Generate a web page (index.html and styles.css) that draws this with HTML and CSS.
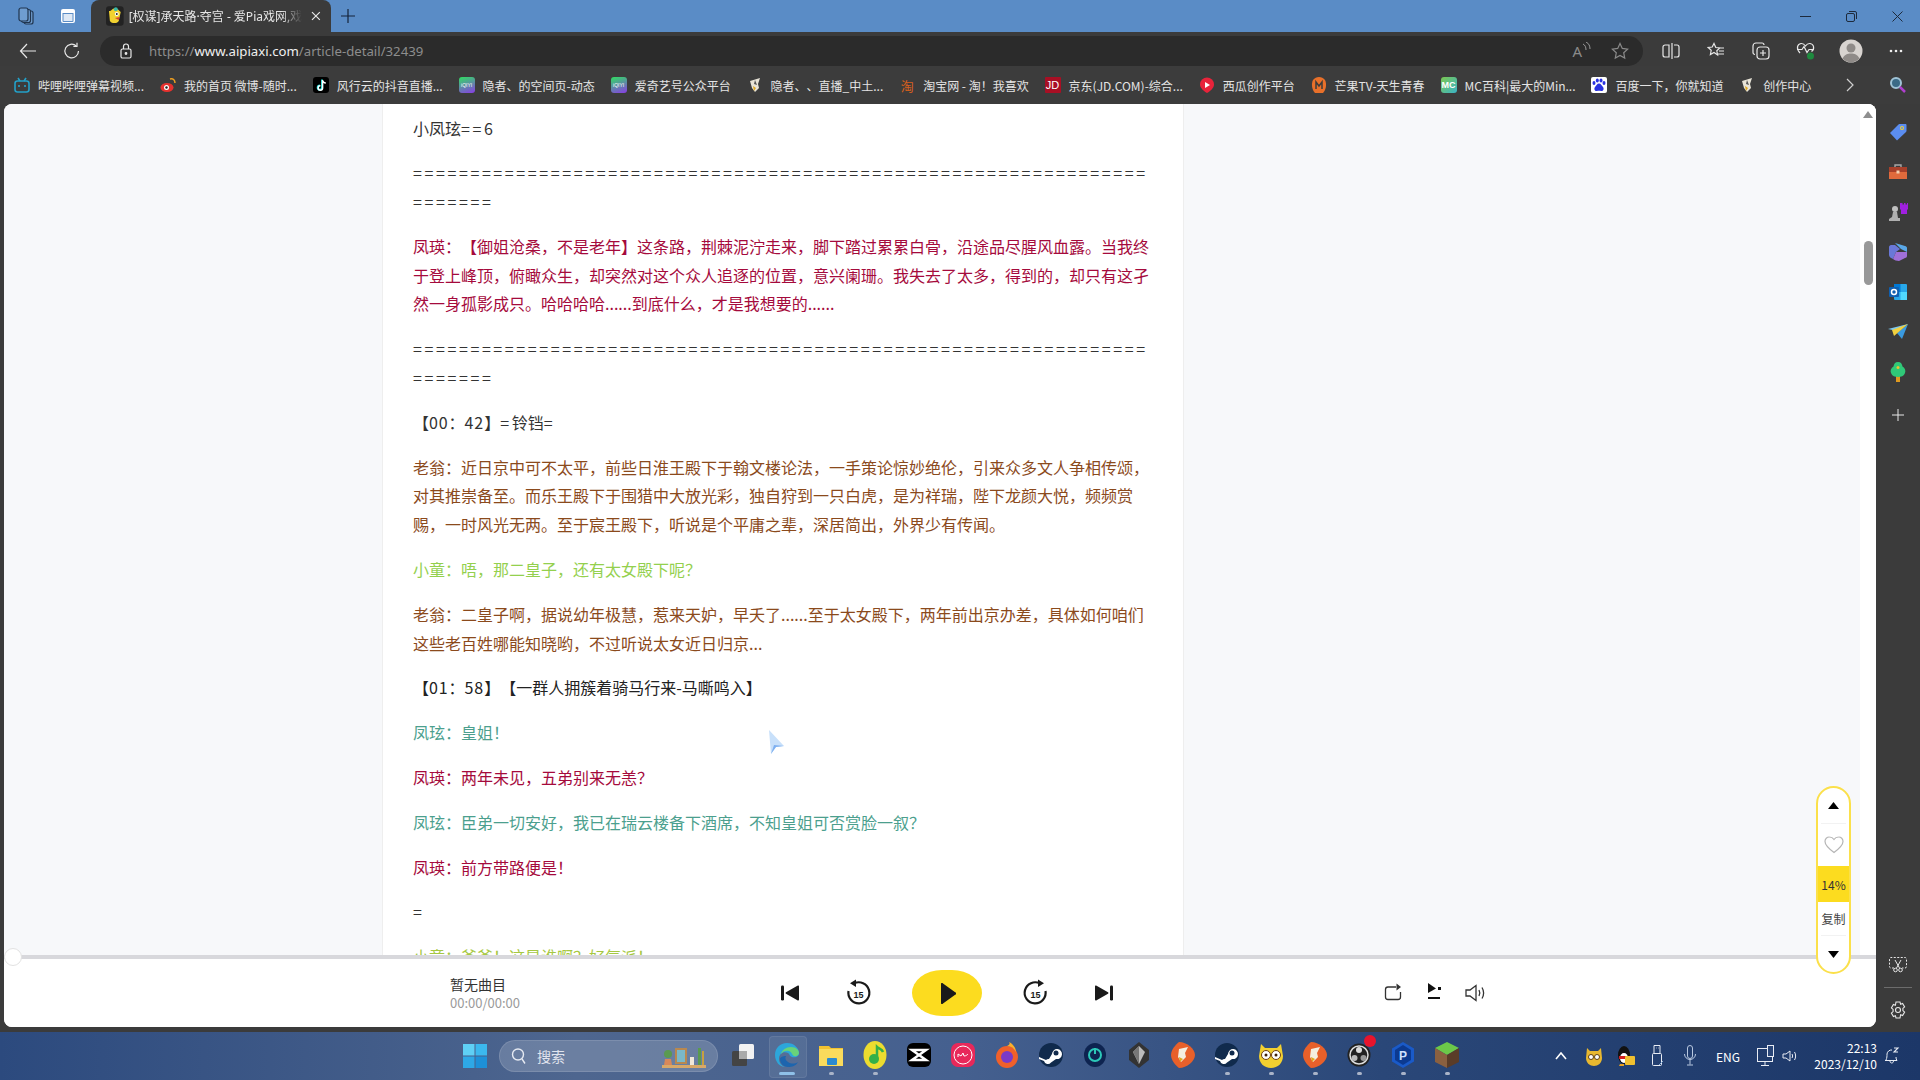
FILE: index.html
```html
<!DOCTYPE html>
<html lang="zh-CN">
<head>
<meta charset="UTF-8" />
<title>[权谋]承天路·夺宫 - 爱Pia戏网</title>
<link rel="stylesheet" href="styles.css">
</head>
<body>
<div class="screen">

  <!-- title bar -->
  <div class="titlebar">
    <span class="bar-slot"><svg width="20" height="20" viewBox="0 0 20 20" fill="none" stroke="#20354f" stroke-width="1.2"><rect x="8" y="5" width="9" height="13" rx="2" fill="#6f9dd0"/><rect x="5.5" y="3.5" width="9" height="13" rx="2" fill="#6f9dd0"/><rect x="3" y="2" width="9" height="13" rx="2" fill="#6f9dd0"/></svg></span>
    <span class="bar-slot"><svg width="16" height="16" viewBox="0 0 16 16" fill="#fff"><path d="M3 1h10a2 2 0 0 1 2 2v10a2 2 0 0 1-2 2H3a2 2 0 0 1-2-2V3a2 2 0 0 1 2-2z"/><path d="M2.5 5h11v8a1 1 0 0 1-1 1h-9a1 1 0 0 1-1-1z" fill="#5a8cc6"/><rect x="3.5" y="6" width="9" height="7" fill="#dfe9f5"/></svg></span>
    <div class="tab">
      <svg width="18" height="20" viewBox="0 0 18 20"><rect width="18" height="20" rx="3" fill="#222"/><path d="M3 5c3 0 3-3 6-3s4 2 6 4l-2 9c-2 3-7 3-9 0z" fill="#f2d230"/><circle cx="11" cy="8" r="2" fill="#fff"/><circle cx="11" cy="8" r="1" fill="#222"/><path d="M9 12l5-1-1 3z" fill="#d8402e"/><circle cx="10" cy="3" r="2" fill="#38b6a8"/></svg>
      <span class="tab-title">[权谋]承天路·夺宫 - 爱Pia戏网,戏</span>
      <svg width="10" height="10" viewBox="0 0 10 10" stroke="#e8e8e8" stroke-width="1.2"><path d="M1 1l8 8M9 1l-8 8"/></svg>
    </div>
    <span class="new-tab"><svg width="16" height="16" viewBox="0 0 16 16" stroke="#14233a" stroke-width="1.2"><path d="M8 1v14M1 8h14"/></svg></span>
    <div class="win-btns">
      <span><svg width="11" height="11" viewBox="0 0 11 11" stroke="#1d2a3c"><path d="M0 5.5h11"/></svg></span>
      <span><svg width="11" height="11" viewBox="0 0 11 11" fill="none" stroke="#1d2a3c"><rect x="0.5" y="2.5" width="8" height="8" rx="1.5"/><path d="M3 0.5h6a1.5 1.5 0 0 1 1.5 1.5v6"/></svg></span>
      <span><svg width="11" height="11" viewBox="0 0 11 11" stroke="#1d2a3c"><path d="M0.5 0.5l10 10M10.5 0.5l-10 10"/></svg></span>
    </div>
  </div>

  <!-- toolbar -->
  <div class="toolbar">
    <span class="tool-slot"><svg width="18" height="18" viewBox="0 0 18 18" fill="none" stroke="#e8e8e8" stroke-width="1.2"><path d="M17 9H1.5M8 2L1.5 9 8 16"/></svg></span>
    <span class="tool-slot"><svg width="18" height="18" viewBox="0 0 18 18" fill="none" stroke="#e8e8e8" stroke-width="1.2"><path d="M15.5 9a6.8 6.8 0 1 1-2.2-5"/><path d="M14 .8v3.6h-3.6"/></svg></span>
    <div class="address">
      <svg width="14" height="16" viewBox="0 0 14 16" fill="none" stroke="#e8e8e8" stroke-width="1.2"><rect x="2" y="6" width="10" height="9" rx="1.5"/><path d="M4.500 6V3.500a2.500 2.500 0 0 1 5 0V6"/><circle cx="7" cy="10.500" r=".8" fill="#e8e8e8"/></svg>
      <span class="url"><span>https://</span><b>www.aipiaxi.com</b><span>/article-detail/32439</span></span>
      <span class="addr-right">
        <span class="read-a">A<svg width="9" height="12" viewBox="0 0 9 12" fill="none" stroke="#9a9a9a"><path d="M1 2c2 1 3 3 3 6M4 0c3 1.500 4 4 4 7"/></svg></span>
        <svg width="18" height="18" viewBox="0 0 18 18" fill="none" stroke="#8a8a8a" stroke-width="1.2"><path d="M9 1.500l2.300 4.900 5.300.7-3.900 3.600 1 5.300L9 13.400 4.300 16l1-5.300L1.400 7.100l5.300-.7z"/></svg>
      </span>
    </div>
    <div class="tool-right">
      <span><svg width="18" height="18" viewBox="0 0 18 18" fill="none" stroke="#e8e8e8" stroke-width="1.2"><path d="M7 3H3a2 2 0 0 0-2 2v8a2 2 0 0 0 2 2h4zM10 1v16M12 3h3a2 2 0 0 1 2 2v8a2 2 0 0 1-2 2h-3"/></svg></span>
      <span><svg width="18" height="18" viewBox="0 0 18 18" fill="none" stroke="#e8e8e8" stroke-width="1.2"><path d="M7 1.500l1.800 4 4 .5-3 2.800.8 4.200L7 10.500 3.400 12.500l.8-4.200-3-2.800 4-.5zM12 6h5M12 9h5M11 12h6"/></svg></span>
      <span><svg width="18" height="18" viewBox="0 0 18 18" fill="none" stroke="#e8e8e8" stroke-width="1.2"><path d="M3 12.500A2 2 0 0 1 1 10.500V4a3 3 0 0 1 3-3h6a2 2 0 0 1 2 2"/><rect x="5" y="5" width="12" height="12" rx="3"/><path d="M11 8v6M8 11h6"/></svg></span>
      <span class="health"><svg width="20" height="20" viewBox="0 0 20 20" fill="none" stroke="#e8e8e8" stroke-width="1.2"><path d="M4 12C0 8 1 3 5 2.500c2-.2 3.500 1 4.500 2.500 1-1.500 2.500-2.700 4.500-2.500 4 .5 5 5.500 1.500 8"/><path d="M1 8.500h5l2-3 3 6 2-3h5"/><circle cx="14.500" cy="15" r="3.500" fill="#1e8a3e" stroke="none"/></svg></span>
      <span><svg width="24" height="24" viewBox="0 0 24 24"><circle cx="12" cy="12" r="11.500" fill="#d8d4d0"/><circle cx="12" cy="9" r="4.500" fill="#8f8b88"/><path d="M3.500 19.500c2-4 5-5 8.500-5s6.500 1 8.500 5a11.500 11.500 0 0 1-17 0z" fill="#8f8b88"/></svg></span>
      <span><svg width="14" height="4" viewBox="0 0 14 4" fill="#eee"><circle cx="2" cy="2" r="1.300"/><circle cx="7" cy="2" r="1.300"/><circle cx="12" cy="2" r="1.300"/></svg></span>
    </div>
  </div>

  <!-- bookmarks -->
  <div class="bookmarks">
    <a class="bm"><svg width="16" height="16" viewBox="0 0 16 16" fill="none" stroke="#23a0c8" stroke-width="1.600"><rect x="1" y="4" width="14" height="11" rx="2.500"/><path d="M4 1l2 3M12 1l-2 3M5 8v2M11 8v2"/></svg>哔哩哔哩弹幕视频...</a>
    <a class="bm"><svg width="16" height="16" viewBox="0 0 16 16"><ellipse cx="7" cy="10.500" rx="6.500" ry="4.500" fill="#e6322e"/><circle cx="6.500" cy="10.500" r="2.500" fill="#fff"/><circle cx="6.500" cy="10.500" r="1.200" fill="#222"/><path d="M10 2c3-1 5 1 5 4" fill="none" stroke="#f0a020" stroke-width="1.500"/></svg>我的首页 微博-随时...</a>
    <a class="bm"><svg width="16" height="16" viewBox="0 0 16 16"><rect width="16" height="16" rx="3" fill="#000"/><path d="M9 2.500v8a2.200 2.200 0 1 1-2.200-2.200" fill="none" stroke="#25f4ee" stroke-width="1.800"/><path d="M9.600 3v8a2.200 2.200 0 1 1-2.200-2.200M9.600 3c.3 2 1.500 3 3.200 3" fill="none" stroke="#fff" stroke-width="1.500"/></svg>风行云的抖音直播...</a>
    <a class="bm"><span class="iq">iQIYI</span>隐者、的空间页-动态</a>
    <a class="bm"><span class="iq">iQIYI</span>爱奇艺号公众平台</a>
    <a class="bm"><svg width="16" height="16" viewBox="0 0 16 16"><path d="M3 4l10-3-2 6 1 4-4 4-3-4z" fill="#e8e4d8"/><path d="M6 9l3 2-2 3z" fill="#e0a820"/><path d="M8 3l2 5-3-1z" fill="#555"/></svg>隐者、、直播_中土...</a>
    <a class="bm"><span class="tao">淘</span>淘宝网 - 淘！我喜欢</a>
    <a class="bm"><span class="jd">JD</span>京东(JD.COM)-综合...</a>
    <a class="bm"><svg width="16" height="16" viewBox="0 0 16 16"><path d="M8 16C3 13 1 10 1 7.500a7 7 0 0 1 14 0C15 10 13 13 8 16z" fill="#e8233a"/><path d="M6 5l5 3-5 3z" fill="#fff"/></svg>西瓜创作平台</a>
    <a class="bm"><svg width="16" height="18" viewBox="0 0 16 18"><path d="M2 4c3-4 9-4 12 0 2 4 1 10-2 13H4C1 14 0 8 2 4z" fill="#e8702a"/><path d="M5 13V6l3 4 3-4v7" fill="none" stroke="#3b3b3b" stroke-width="1.500"/></svg>芒果TV-天生青春</a>
    <a class="bm"><span class="mc">MC</span>MC百科|最大的Min...</a>
    <a class="bm"><svg width="16" height="16" viewBox="0 0 16 16"><rect width="16" height="16" rx="2" fill="#fff"/><g fill="#2932e1"><ellipse cx="3" cy="6" rx="1.500" ry="2"/><ellipse cx="6.300" cy="3.500" rx="1.500" ry="2"/><ellipse cx="10" cy="3.500" rx="1.500" ry="2"/><ellipse cx="13" cy="6" rx="1.500" ry="2"/><path d="M8 6.500c2 0 2.500 2 4 3.500 1.500 2 0 4.500-2 4-1-.3-3-.3-4 0-2 .5-3.500-2-2-4 1.500-1.500 2-3.500 4-3.500z"/></g></svg>百度一下，你就知道</a>
    <a class="bm"><svg width="16" height="16" viewBox="0 0 16 16"><path d="M3 4l10-3-2 6 1 4-4 4-3-4z" fill="#e8e4d8"/><path d="M6 9l3 2-2 3z" fill="#e0a820"/><path d="M8 3l2 5-3-1z" fill="#555"/></svg>创作中心</a>
    <svg class="bm-more" width="8" height="14" viewBox="0 0 8 14" fill="none" stroke="#cfcfcf" stroke-width="1.200"><path d="M1 1l6 6-6 6"/></svg>
    <svg class="bm-search" width="18" height="18" viewBox="0 0 18 18" fill="none"><circle cx="7" cy="7" r="5" stroke="#9fc3d6" stroke-width="2" fill="#3a6a86"/><path d="M11 11l5 5" stroke="#b040d0" stroke-width="2.500"/></svg>
  </div>

  <div class="main">
    <div class="content">
      <div class="reader">
        <div class="article">
          <p>小凤玹<span class="eq">==6</span></p>
          <p class="sep">=======================================================================</p>
          <p class="red">凤瑛：【御姐沧桑，不是老年】这条路，荆棘泥泞走来，脚下踏过累累白骨，沿途品尽腥风血露。当我终于登上峰顶，俯瞰众生，却突然对这个众人追逐的位置，意兴阑珊。我失去了太多，得到的，却只有这孑然一身孤影成只。哈哈哈哈......到底什么，才是我想要的......</p>
          <p class="sep">=======================================================================</p>
          <p>【<span class="num">00</span>：<span class="num">42</span>】<span class="eq">=</span>铃铛<span class="eq">=</span></p>
          <p class="brown">老翁：近日京中可不太平，前些日淮王殿下于翰文楼论法，一手策论惊妙绝伦，引来众多文人争相传颂，对其推崇备至。而乐王殿下于围猎中大放光彩，独自狩到一只白虎，是为祥瑞，陛下龙颜大悦，频频赏赐，一时风光无两。至于宸王殿下，听说是个平庸之辈，深居简出，外界少有传闻。</p>
          <p class="lime">小童：唔，那二皇子，还有太女殿下呢？</p>
          <p class="brown">老翁：二皇子啊，据说幼年极慧，惹来天妒，早夭了......至于太女殿下，两年前出京办差，具体如何咱们这些老百姓哪能知晓哟，不过听说太女近日归京...</p>
          <p class="dark">【<span class="num">01</span>：<span class="num">58</span>】【一群人拥簇着骑马行来-马嘶鸣入】</p>
          <p class="teal">凤玹：皇姐！</p>
          <p class="red">凤瑛：两年未见，五弟别来无恙？</p>
          <p class="teal">凤玹：臣弟一切安好，我已在瑞云楼备下酒席，不知皇姐可否赏脸一叙？</p>
          <p class="red">凤瑛：前方带路便是！</p>
          <p>=</p>
          <p class="olive">小童：爷爷！这是谁啊？好气派！</p>
        </div>
        <div class="scroll-track">
          <svg class="scroll-up" width="10" height="7" viewBox="0 0 10 7" fill="#8f8f8f"><path d="M5 0l5 7H0z"/></svg>
          <span class="scroll-thumb"></span>
        </div>
      </div>

      <div class="progress"><span class="progress-dot"></span></div>
      <div class="player">
        <div class="track">
          <div class="track-name">暂无曲目</div>
          <div class="track-time">00:00/00:00</div>
        </div>
        <div class="controls">
          <svg width="32" height="32" viewBox="0 0 32 32" fill="#1a1a1a"><rect x="7" y="8.500" width="3" height="15" rx="1.200"/><path d="M25 9.500v13a1 1 0 0 1-1.600.8L12 16.800a1 1 0 0 1 0-1.600l11.400-6.500a1 1 0 0 1 1.600.8z"/></svg>
          <svg width="32" height="32" viewBox="0 0 32 32" fill="none"><path d="M12 6.500A10.500 10.500 0 1 1 6.500 14" stroke="#1a1a1a" stroke-width="2.200"/><path d="M14 2.500v7.500l-6-3.700z" fill="#1a1a1a"/><text x="16.500" y="20.500" class="skip-num">15</text></svg>
          <span class="play"><svg width="15" height="21" viewBox="0 0 15 21" fill="#1a1a1a"><path d="M2 .5l12.500 9a1 1 0 0 1 0 2L2 20.500a1 1 0 0 1-2-1v-18a1 1 0 0 1 2-1z"/></svg></span>
          <svg width="32" height="32" viewBox="0 0 32 32" fill="none"><path d="M20 6.500A10.500 10.500 0 1 0 25.500 14" stroke="#1a1a1a" stroke-width="2.200"/><path d="M18 2.500v7.500l6-3.700z" fill="#1a1a1a"/><text x="15.500" y="20.500" class="skip-num">15</text></svg>
          <svg width="32" height="32" viewBox="0 0 32 32" fill="#1a1a1a"><rect x="22" y="8.500" width="3" height="15" rx="1.200"/><path d="M7 9.500v13a1 1 0 0 0 1.600.8L20 16.800a1 1 0 0 0 0-1.600L8.600 8.700a1 1 0 0 0-1.600.8z"/></svg>
        </div>
        <div class="player-right">
          <svg width="28" height="28" viewBox="0 0 28 28" fill="none" stroke="#333" stroke-width="1.300"><path d="M17 8H9a2.500 2.500 0 0 0-2.500 2.500V18A2.500 2.500 0 0 0 9 20.500h10a2.500 2.500 0 0 0 2.500-2.500v-5"/><path d="M17.500 4.500L22 8l-4.500 3.500z" fill="#333" stroke="none"/></svg>
          <svg width="28" height="28" viewBox="0 0 28 28" fill="#111"><path d="M8 4l8 5.500L8 14z"/><rect x="18" y="8" width="3" height="3"/><rect x="8" y="18" width="12" height="2"/></svg>
          <svg width="28" height="28" viewBox="0 0 28 28" fill="none" stroke="#333" stroke-width="1.300"><path d="M5 11h4l6-4.500v15L9 17H5z"/><path d="M18 11c1 1.800 1 4.200 0 6M21 8.500c2 3.400 2 7.600 0 11"/></svg>
        </div>
      </div>

      <!-- floating tools -->
      <div class="float-bar">
        <div class="float-cell f-up"><svg width="11" height="7" viewBox="0 0 11 7"><path d="M5.500 0L11 7H0z"/></svg></div>
        <div class="float-cell f-heart"><svg width="20" height="18" viewBox="0 0 20 18" fill="none" stroke="#b5b5b5" stroke-width="1.200"><path d="M10 16.500C4 12 1 9 1 5.500A4.300 4.300 0 0 1 5.500 1C7.500 1 9 2 10 3.500 11 2 12.500 1 14.500 1A4.300 4.300 0 0 1 19 5.500C19 9 16 12 10 16.500z"/></svg></div>
        <div class="float-pct">14%</div>
        <div class="float-cell f-copy">复制</div>
        <div class="float-cell f-down"><svg width="11" height="7" viewBox="0 0 11 7"><path d="M0 0h11L5.500 7z"/></svg></div>
      </div>

      <!-- mouse pointer -->
      <svg class="pointer" width="16" height="24" viewBox="0 0 16 24"><path d="M1 0l15 16-8 1-5 7z" fill="#c8e0fa"/><path d="M16 16l-8 1-5 7 3-9z" fill="#7fb0f0"/></svg>
    </div>

    <!-- edge sidebar -->
    <div class="side">
      <span class="side-item"><svg width="18" height="18" viewBox="0 0 18 18"><path d="M1 10l8.500-8.500c.5-.5 1-.5 1.500-.5h5.500c.5 0 1 .5 1 1V7.500c0 .5 0 1-.5 1.500L8 17.500z" fill="#5b8df0"/><circle cx="13" cy="5" r="2" fill="#f2d230"/><circle cx="13" cy="5" r="1" fill="#5b8df0"/></svg></span>
      <span class="side-item"><svg width="20" height="16" viewBox="0 0 20 16"><path d="M7 3V1h6v2" fill="none" stroke="#a8a8a8" stroke-width="1.400"/><rect x="1" y="3" width="18" height="6" fill="#a8402a"/><rect x="1" y="8" width="18" height="7" fill="#e06a3c"/><rect x="8.500" y="6.500" width="3" height="3" fill="#f2d0b0"/></svg></span>
      <span class="side-item"><svg width="20" height="20" viewBox="0 0 20 20"><path d="M13 1h1.500v1.500H16V1h1.500v1.500H19V1h1v6l-1 1v4h-6V8l-1-1V1z" fill="#a020e0"/><circle cx="7" cy="7" r="3" fill="#c0c0c0"/><path d="M5 10h4l1 6h2v3H1v-2l3-2z" fill="#b0b0b0"/></svg></span>
      <span class="side-item"><svg width="18" height="20" viewBox="0 0 18 20"><path d="M6 1l10 3c1 .3 2 1 2 2v4l-6-3z" fill="#5aa8e8"/><path d="M0 5c0-1 1-2 2-2h4l5 4-4 3-3 7c-2-1-4-2-4-4z" fill="#6a78d8"/><path d="M18 10v4c0 1-1 2-2 2l-6 3c-2 0-5-1-6-2l3-7z" fill="#a070d8"/></svg></span>
      <span class="side-item"><svg width="18" height="18" viewBox="0 0 18 18"><rect x="5" y="1" width="13" height="16" rx="1" fill="#28a8ea"/><rect x="5" y="1" width="6.500" height="8" fill="#0078d4"/><rect x="11.500" y="9" width="6.500" height="8" fill="#50d9ff"/><rect y="4" width="10" height="10" rx="1" fill="#0f5fb0"/><circle cx="5" cy="9" r="2.500" fill="none" stroke="#fff" stroke-width="1.500"/></svg></span>
      <span class="side-item"><svg width="20" height="16" viewBox="0 0 20 16"><path d="M0 5l20-5-11 7z" fill="#7cc8f0"/><path d="M20 0l-6 15-5-6z" fill="#3a9ae0"/><path d="M4 6l16-6L6 12z" fill="#f0d040"/></svg></span>
      <span class="side-item"><svg width="16" height="20" viewBox="0 0 16 20"><rect x="6" y="14" width="4" height="6" fill="#e09a20"/><path d="M8 0c3 0 4 2 4.500 4.500C15 6 16 9 15 11c-1 3-4 4-7 4s-6-1-7-4C0 9 1 6 3.500 4.500 4 2 5 0 8 0z" fill="#30c878"/><circle cx="8" cy="5.500" r="1.500" fill="#f0c030"/></svg></span>
      <span class="side-item side-plus"><svg width="14" height="14" viewBox="0 0 14 14" stroke="#e8e8e8"><path d="M7 1v12M1 7h12"/></svg></span>
      <span class="side-gap"></span>
      <span class="side-item"><svg width="18" height="16" viewBox="0 0 18 16" fill="none" stroke="#e8e8e8"><path d="M5 11H2a1.500 1.500 0 0 1-1.500-1.500V2A1.500 1.500 0 0 1 2 .5h14A1.500 1.500 0 0 1 17.500 2v7.500A1.500 1.500 0 0 1 16 11h-3" stroke-dasharray="2 1.500"/><path d="M6 3l4.500 8M12 3l-4.500 8"/><circle cx="6.500" cy="13" r="1.800"/><circle cx="11.500" cy="13" r="1.800"/></svg></span>
      <span class="side-line"></span>
      <span class="side-item"><svg width="18" height="18" viewBox="0 0 18 18" fill="none" stroke="#e8e8e8" stroke-width="1.100"><path d="M7 1h4l.6 2.300 2-.8 2 3.400-1.700 1.500v2.200l1.700 1.500-2 3.400-2-.8L11 17H7l-.6-2.300-2 .8-2-3.400 1.700-1.500V8.400L2.400 6.900l2-3.400 2 .8z"/><circle cx="9" cy="9" r="2.500"/></svg></span>
    </div>
  </div>

  <!-- taskbar -->
  <div class="taskbar">
    <svg class="win-logo" width="24" height="24" viewBox="0 0 24 24"><rect width="11.500" height="11.500" fill="#5fd0f5"/><rect x="12.500" width="11.500" height="11.500" fill="#3bb8ee"/><rect y="12.500" width="11.500" height="11.500" fill="#2ea8e6"/><rect x="12.500" y="12.500" width="11.500" height="11.500" fill="#1d90d8"/></svg>
    <div class="search-box">
      <svg width="16" height="18" viewBox="0 0 16 18" fill="none" stroke="#e6eaf2" stroke-width="1.400"><circle cx="7" cy="7.500" r="5.500"/><path d="M11 12l3 4.500"/></svg>
      <span>搜索</span>
      <svg class="search-art" width="46" height="28" viewBox="0 0 46 28"><rect x="1" y="23" width="44" height="3" fill="#d8a868"/><rect x="14" y="6" width="12" height="16" fill="#b88850"/><rect x="16" y="8" width="8" height="12" fill="#7ab8c8"/><path d="M3 23l1-6h6l1 6z" fill="#d88858"/><circle cx="7" cy="12" r="4" fill="#5a9a50"/><rect x="29" y="15" width="4" height="8" fill="#f0e8d8"/><rect x="37" y="6" width="3" height="17" fill="#5a9a50"/><rect x="41" y="9" width="2" height="14" fill="#c8a040"/></svg>
    </div>
    <div class="apps">
      <span class="app"><svg width="24" height="24" viewBox="0 0 24 24"><rect x="1" y="8" width="15" height="15" rx="1.500" fill="#444"/><rect x="8" y="1" width="15" height="15" rx="1.500" fill="#f2f2f2"/><rect x="8" y="8" width="8" height="8" fill="#aaa"/></svg></span>
      <span class="app app-active"><svg width="26" height="26" viewBox="0 0 26 26"><path d="M1 13C1 6 6 1 13 1c7 0 12 5 12 10 0 4-4 5-7 4-3-1-2-3-4-4-4-2-9 0-9 6 0 4 3 7 6 8C6 25 1 20 1 13z" fill="#1ea0d8"/><path d="M25 11c0-3-3-6-8-6-5 0-9 3-10 7 2-3 5-4 8-3 3 1 3 4 5 5 2 .5 5-.5 5-3z" fill="#5ed070"/><path d="M6 17c0 4 3 8 8 8 4 0 8-1 10-5-3 2-7 2-10 0-3-2-3-4-2-6-3 0-6 1-6 3z" fill="#0c5aa8"/></svg><i class="run run-wide"></i></span>
      <span class="app"><svg width="24" height="24" viewBox="0 0 24 24"><path d="M0 3h10l2 2h12v18H0z" fill="#f2c230"/><rect y="6" width="24" height="17" fill="#fadb5c"/><rect x="8" y="15" width="10" height="7" rx="1" fill="#2a8ad0"/></svg><i class="run"></i></span>
      <span class="app"><svg width="24" height="28" viewBox="0 0 24 28"><ellipse cx="12" cy="14" rx="11.500" ry="14" fill="#ecdc30"/><circle cx="11" cy="18" r="5" fill="#34b048"/><path d="M14 18V6c2 2 5 2 6 5" fill="none" stroke="#34b048" stroke-width="2.500"/></svg><i class="run"></i></span>
      <span class="app"><svg width="24" height="24" viewBox="0 0 24 24"><rect width="24" height="24" rx="6" fill="#000"/><path d="M5 7h14L5 17h14z" fill="none" stroke="#fff" stroke-width="2.500"/></svg></span>
      <span class="app"><svg width="24" height="24" viewBox="0 0 24 24"><rect width="24" height="24" rx="7" fill="#e8285a"/><circle cx="12" cy="12" r="9" fill="none" stroke="#fff"/><path d="M7 14v-3l3 2 2-3 1 3c2 0 3-1 4-2" fill="none" stroke="#fff"/></svg></span>
      <span class="app"><svg width="24" height="26" viewBox="0 0 24 26"><circle cx="12" cy="15" r="11" fill="#f0602a"/><circle cx="12" cy="15" r="6" fill="#7a3ac8"/><path d="M12 4c3-1 3-3 2-4 4 2 7 6 7 10-2-4-5-6-9-6z" fill="#fcb02a"/></svg></span>
      <span class="app"><svg width="24" height="24" viewBox="0 0 24 24"><circle cx="12" cy="12" r="12" fill="#102a4c"/><path d="M0 14l7 3a4 4 0 0 1 3-1l3-5a5 5 0 1 1 4 5l-5 3.500A4 4 0 0 1 5 18l-5-2z" fill="#fff"/><circle cx="17" cy="10" r="2.500" fill="#102a4c"/></svg></span>
      <span class="app"><svg width="22" height="24" viewBox="0 0 22 24"><ellipse cx="11" cy="12" rx="11" ry="12" fill="#0e2450"/><circle cx="11" cy="12" r="6" fill="none" stroke="#2cc8b8" stroke-width="2"/><path d="M11 5v6" stroke="#2cc8b8" stroke-width="2"/></svg></span>
      <span class="app"><svg width="22" height="26" viewBox="0 0 22 26"><path d="M11 0l10 8v10l-10 8L1 18V8z" fill="#333"/><path d="M11 4l6 6-6 12-6-12z" fill="#bcbcbc"/><path d="M11 4v18l-6-12z" fill="#777"/></svg></span>
      <span class="app"><svg width="24" height="26" viewBox="0 0 24 26"><path d="M8 0c8 0 16 7 16 13 0 6-8 13-16 13 0 0-8-6-8-13S8 0 8 0z" fill="#e8602a"/><path d="M8 7l9-2-3 6 1 4-5 5-3-5z" fill="#f4eee0"/><path d="M8 15l4 2-3 3z" fill="#e0a820"/></svg></span>
      <span class="app"><svg width="24" height="24" viewBox="0 0 24 24"><circle cx="12" cy="12" r="12" fill="#102a4c"/><path d="M0 14l7 3a4 4 0 0 1 3-1l3-5a5 5 0 1 1 4 5l-5 3.500A4 4 0 0 1 5 18l-5-2z" fill="#fff"/><circle cx="17" cy="10" r="2.500" fill="#102a4c"/></svg><i class="run"></i></span>
      <span class="app"><svg width="26" height="26" viewBox="0 0 26 26"><path d="M3 2l4 4h12l4-4 2 12c0 7-5 12-12 12S1 21 1 14z" fill="#f2d030"/><circle cx="8" cy="13" r="4.500" fill="#fff" stroke="#704010"/><circle cx="18" cy="13" r="4.500" fill="#fff" stroke="#704010"/><circle cx="8" cy="13" r="1.500" fill="#402008"/><circle cx="18" cy="13" r="1.500" fill="#402008"/></svg><i class="run"></i></span>
      <span class="app"><svg width="24" height="26" viewBox="0 0 24 26"><path d="M8 0c8 0 16 7 16 13 0 6-8 13-16 13 0 0-8-6-8-13S8 0 8 0z" fill="#e8602a"/><path d="M8 7l9-2-3 6 1 4-5 5-3-5z" fill="#f4eee0"/><path d="M8 15l4 2-3 3z" fill="#e0a820"/></svg><i class="run"></i></span>
      <span class="app app-obs"><svg width="24" height="24" viewBox="0 0 24 24"><circle cx="12" cy="12" r="11.500" fill="#222"/><circle cx="12" cy="12" r="9" fill="none" stroke="#ddd" stroke-width="1.500"/><circle cx="12" cy="7" r="3" fill="#ddd"/><circle cx="7.500" cy="15" r="3" fill="#bbb"/><circle cx="16.500" cy="15" r="3" fill="#999"/></svg><b class="obs-dot"></b><i class="run"></i></span>
      <span class="app"><svg width="22" height="26" viewBox="0 0 22 26"><path d="M11 0l11 6.500v13L11 26 0 19.500v-13z" fill="#1a5ac8"/><path d="M11 3l8 5v10l-8 5-8-5V8z" fill="#0c3a90"/><text x="11" y="18" class="p-num">P</text></svg><i class="run"></i></span>
      <span class="app"><svg width="24" height="26" viewBox="0 0 24 26"><path d="M12 0l12 6-12 7L0 6z" fill="#6cc849"/><path d="M0 6l12 7v13L0 20z" fill="#8a6040"/><path d="M24 6l-12 7v13l12-6z" fill="#5a3c28"/></svg><i class="run"></i></span>
    </div>
    <div class="tray">
      <svg class="tray-up" width="12" height="8" viewBox="0 0 12 8" fill="none" stroke="#fff" stroke-width="1.600"><path d="M1 7l5-6 5 6"/></svg>
      <svg class="tray-cat" width="18" height="20" viewBox="0 0 18 20"><path d="M2 2l3 3h8l3-3 1 10c0 5-4 8-8 8s-8-3-8-8z" fill="#e8b830"/><circle cx="6" cy="11" r="2.500" fill="#fff" stroke="#604010"/><circle cx="12" cy="11" r="2.500" fill="#fff" stroke="#604010"/></svg>
      <svg class="tray-qq" width="18" height="22" viewBox="0 0 18 22"><ellipse cx="7" cy="10" rx="6" ry="9" fill="#111"/><ellipse cx="7" cy="13" rx="4" ry="5" fill="#fff"/><path d="M2 11h10v3H2z" fill="#d02020"/><rect x="8" y="11" width="10" height="9" rx="1" fill="#f0c030"/><path d="M3 19h4v2H2z" fill="#e8a020"/></svg>
      <svg class="tray-usb" width="14" height="24" viewBox="0 0 14 24" fill="none" stroke="#e8ecf4"><rect x="2.500" y="9.500" width="9" height="12" rx="1"/><path d="M4 9.500v-8h6v8"/><path d="M6 4h.5M8 4h.5"/><path d="M9 21l4-4" stroke="#8ab0d8"/></svg>
      <svg class="tray-mic" width="14" height="24" viewBox="0 0 14 24" fill="none" stroke="#b8c8e0"><rect x="4.500" y="1.500" width="5" height="13" rx="2.500"/><path d="M1.500 10a5.500 5.500 0 0 0 11 0M7 15.500v5M4 21h6"/></svg>
      <span class="tray-eng">ENG</span>
      <svg class="tray-net" width="18" height="22" viewBox="0 0 18 22" fill="none" stroke="#e8ecf4"><rect x=".5" y="3.500" width="15" height="13"/><path d="M8 17v3M4 20.500h8"/><rect x="10.500" y=".5" width="6" height="11" fill="#2a4678"/></svg>
      <svg class="tray-vol" width="16" height="14" viewBox="0 0 16 14" fill="none" stroke="#e8ecf4"><path d="M1 5h3l4-3v10l-4-3H1z"/><path d="M10 5c.8 1.300.8 2.700 0 4M12.500 3c1.500 2.500 1.500 5.500 0 8"/></svg>
      <div class="clock"><div>22:13</div><div>2023/12/10</div></div>
      <svg class="tray-bell" width="16" height="18" viewBox="0 0 16 18" fill="none" stroke="#e8ecf4"><path d="M2 13c1-2 1-4 1-6a4.500 4.500 0 0 1 5-4M1 13.500h12c-.8-1-1-2-1-3.500M6 14c0 1.500 1 2 1.800 2s1.500-.5 1.700-2"/><path d="M10 1h4l-4 4h4" stroke-width="1.100"/></svg>
    </div>
  </div>

</div>
</body>
</html>
```

FILE: styles.css
```css
:root {
  --clr-title: #5a8cc6;
  --clr-chrome: #3b3b3b;
  --clr-yellow: #fcdc1f;
}

* { box-sizing: border-box; }

html, body {
  margin: 0;
  height: 100%;
  overflow: hidden;
}

body {
  font-family: "Noto Sans CJK SC", "Noto Sans", sans-serif;
  text-spacing-trim: space-all;
  background: var(--clr-chrome);
  color: #333;
}

.screen {
  width: 1920px;
  height: 1080px;
  display: flex;
  flex-direction: column;
}

/* --- Title bar --- */
.titlebar {
  height: 32px;
  flex: none;
  display: flex;
  align-items: stretch;
  padding-left: 5px;
  background: var(--clr-title);
}
.bar-slot {
  width: 42px;
  display: flex;
  align-items: center;
  justify-content: center;
}
.tab {
  width: 240px;
  margin-left: 2px;
  padding: 0 10px 0 15px;
  display: flex;
  align-items: center;
  gap: 5px;
  background: var(--clr-chrome);
  border-radius: 8px 8px 0 0;
}
.tab-title {
  width: 177px;
  margin-right: 4px;
  overflow: hidden;
  white-space: nowrap;
  font-family: "Noto Sans", "Noto Sans CJK SC", sans-serif;
  font-size: 12px;
  color: #e6e6e6;
  -webkit-mask-image: linear-gradient(90deg, #000 88%, transparent);
  mask-image: linear-gradient(90deg, #000 88%, transparent);
}
.new-tab {
  width: 34px;
  display: flex;
  align-items: center;
  justify-content: center;
}
.win-btns {
  margin-left: auto;
  display: flex;
}
.win-btns span {
  width: 46px;
  display: flex;
  align-items: center;
  justify-content: center;
}

/* --- Toolbar --- */
.toolbar {
  height: 34px;
  flex: none;
  display: flex;
  align-items: flex-end;
  padding-left: 6px;
  background: var(--clr-chrome);
}
.tool-slot {
  width: 44px;
  height: 30px;
  display: flex;
  align-items: center;
  justify-content: center;
}
.address {
  width: 1543px;
  height: 30px;
  margin-left: 6px;
  padding: 0 14px 0 19px;
  display: flex;
  align-items: center;
  background: #2b2b2b;
  border-radius: 15px;
}
.url {
  margin-left: 16px;
  font-family: "Noto Sans", sans-serif;
  font-size: 13.2px;
  color: #8d8d8d;
}
.url b {
  font-weight: 400;
  color: #f0f0f0;
}
.addr-right {
  margin-left: auto;
  display: flex;
  align-items: center;
  gap: 20px;
}
.read-a {
  display: flex;
  font-family: "Noto Sans", sans-serif;
  font-size: 15px;
  line-height: 18px;
  color: #8a8a8a;
}
.tool-right {
  margin-left: 5px;
  display: flex;
}
.tool-right span {
  width: 45px;
  height: 30px;
  display: flex;
  align-items: center;
  justify-content: center;
}

/* --- Bookmarks --- */
.bookmarks {
  height: 38px;
  flex: none;
  display: flex;
  align-items: center;
  padding-left: 14px;
  background: #3c3c3c;
}
.bm {
  display: flex;
  align-items: center;
  gap: 8px;
  margin-right: 15.9px;
  font-size: 12px;
  white-space: nowrap;
  color: #e4e4e4;
}
.bm svg { flex: none; }
.iq, .tao, .jd, .mc {
  width: 16px;
  height: 16px;
  flex: none;
  display: flex;
  align-items: center;
  justify-content: center;
  border-radius: 3px;
  font-family: "Liberation Sans", sans-serif;
}
.iq {
  font-size: 5px;
  color: #fff;
  background: linear-gradient(160deg, #2fe060, #8a3ae8);
}
.tao {
  font-size: 13px;
  font-family: "Noto Sans CJK SC", sans-serif;
  color: #d8601c;
}
.jd {
  font-size: 11px;
  color: #fff;
  background: #a80f24;
  border-radius: 1px;
}
.mc {
  font-size: 9px;
  font-weight: 700;
  color: #fff;
  background: linear-gradient(135deg, #7cc850, #3ab4c8);
}
.bm-more { margin-left: 19px; }
.bm-search { margin-left: 35px; }

/* --- Main area --- */
.main {
  flex: 1;
  min-height: 0;
  display: flex;
  background: var(--clr-chrome);
}
.content {
  position: relative;
  width: 1872px;
  margin: 0 0 5px 4px;
  display: flex;
  flex-direction: column;
  overflow: hidden;
  background: #fff;
  border-radius: 8px;
}
.reader {
  flex: 1;
  min-height: 0;
  display: flex;
  overflow: hidden;
  background: #f7f8fa;
}
.article {
  width: 802px;
  margin-left: 378px;
  padding: 9.5px 30px 0;
  background: #fff;
  border-left: 1px solid #eee;
  border-right: 1px solid #eee;
  font-size: 16px;
  line-height: 28.8px;
}
.article p { margin: 0 0 16px; }
.sep {
  letter-spacing: 2.6px;
  word-break: break-all;
}
.eq { letter-spacing: 2.6px; }
.num { letter-spacing: .9px; }
.red { color: #a50a3c; }
.brown { color: #8b4a1c; }
.lime { color: #94d04e; }
.teal { color: #4c9f8e; }
.olive { color: #a6c842; }
.dark { color: #222; }

.scroll-track {
  width: 16px;
  margin-left: auto;
  position: relative;
  background: #fff;
}
.scroll-up {
  position: absolute;
  top: 7px;
  left: 3px;
}
.scroll-thumb {
  position: absolute;
  top: 137px;
  left: 4px;
  width: 9px;
  height: 44px;
  border-radius: 5px;
  background: #999;
}

/* --- Player --- */
.progress {
  position: relative;
  height: 4px;
  flex: none;
  background: #d8d8dc;
}
.progress-dot {
  position: absolute;
  left: 0;
  top: -7px;
  width: 18px;
  height: 18px;
  border-radius: 50%;
  background: #fff;
  border: 1px solid #e2e2e2;
}
.player {
  height: 68px;
  flex: none;
  display: flex;
  align-items: center;
  padding-left: 446px;
  background: #fff;
}
.track { width: 324px; }
.track-name {
  font-size: 14px;
  line-height: 20px;
  color: #333;
}
.track-time {
  font-size: 13px;
  line-height: 18px;
  color: #9a9a9a;
}
.controls {
  display: flex;
  align-items: center;
  gap: 36px;
}
.skip-num {
  font: 700 9px "Liberation Sans", sans-serif;
  text-anchor: middle;
  fill: #1a1a1a;
}
.play {
  width: 70px;
  height: 46px;
  margin: 0 2px;
  padding-left: 3px;
  display: flex;
  align-items: center;
  justify-content: center;
  background: var(--clr-yellow);
  border-radius: 30px / 23px;
}
.player-right {
  margin-left: 259px;
  display: flex;
  gap: 13px;
}

/* --- Floating tools --- */
.float-bar {
  position: absolute;
  left: 1812px;
  top: 682px;
  width: 35px;
  height: 188px;
  overflow: hidden;
  background: #fff;
  border: 2px solid #fbe04a;
  border-radius: 18px;
}
.float-cell {
  display: flex;
  align-items: center;
  justify-content: center;
  margin: 0 3px;
}
.f-up {
  height: 36px;
  border-bottom: 1px solid #f2f2f2;
}
.f-heart { height: 42px; }
.f-copy {
  height: 34px;
  font-size: 12px;
  white-space: nowrap;
  color: #444;
  border-bottom: 1px solid #f2f2f2;
}
.f-down { height: 36px; }
.float-pct {
  height: 36px;
  display: flex;
  align-items: center;
  justify-content: center;
  font-size: 12px;
  color: #333;
  background: var(--clr-yellow);
}
.pointer {
  position: absolute;
  left: 764px;
  top: 626px;
}

/* --- Sidebar --- */
.side {
  width: 44px;
  flex: none;
  display: flex;
  flex-direction: column;
  align-items: center;
  padding: 8px 0 2px;
}
.side-item {
  width: 44px;
  height: 40px;
  flex: none;
  display: flex;
  align-items: center;
  justify-content: center;
}
.side-plus { margin-top: 3px; }
.side-gap { flex: 1; }
.side-line {
  width: 28px;
  height: 1px;
  margin: 2px 0;
  background: #6c6c6c;
}

/* --- Taskbar --- */
.taskbar {
  height: 48px;
  flex: none;
  display: flex;
  align-items: center;
  padding-left: 463px;
  background: linear-gradient(90deg, #2c4a7e 0%, #4e668f 30%, #45608f 50%, #2a4778 72%, #1c3768 100%);
}
.win-logo { flex: none; }
.search-box {
  width: 219px;
  height: 32px;
  margin-left: 12px;
  padding: 0 10px 0 11px;
  display: flex;
  align-items: center;
  gap: 10px;
  font-size: 14px;
  color: #e0e4ee;
  background: rgba(255, 255, 255, .17);
  border: 1px solid rgba(255, 255, 255, .12);
  border-radius: 16px;
}
.search-art { margin-left: auto; }
.apps {
  display: flex;
  margin-left: 3px;
}
.app {
  position: relative;
  width: 44px;
  height: 48px;
  display: flex;
  align-items: center;
  justify-content: center;
}
.app svg { margin-top: -2px; }
.app-active::before {
  content: "";
  position: absolute;
  left: 4px;
  top: 4px;
  width: 36px;
  height: 40px;
  background: rgba(255, 255, 255, .07);
  border: 1px solid rgba(255, 255, 255, .08);
  border-radius: 4px;
}
.run {
  position: absolute;
  left: 20px;
  bottom: 5px;
  width: 5px;
  height: 3px;
  border-radius: 2px;
  background: #aab4c8;
}
.run-wide {
  left: 14px;
  width: 16px;
  background: #8fc0e8;
}
.obs-dot {
  position: absolute;
  left: 27px;
  top: 3px;
  width: 12px;
  height: 12px;
  border-radius: 50%;
  background: #e8142c;
}
.p-num {
  font: 700 12px "Liberation Sans", sans-serif;
  text-anchor: middle;
  fill: #cfe0ff;
}
.tray {
  flex: 1;
  display: flex;
  align-items: center;
  padding-left: 86px;
  color: #fff;
}
.tray-cat { margin-left: 18px; }
.tray-qq { margin-left: 14px; }
.tray-usb { margin-left: 15px; }
.tray-mic { margin-left: 19px; }
.tray-eng {
  margin-left: 19px;
  font-size: 12px;
}
.tray-net { margin-left: 17px; }
.tray-vol { margin-left: 7px; }
.clock {
  width: 72px;
  margin-left: 7px;
  text-align: right;
  font-size: 12px;
  line-height: 16px;
}
.tray-bell { margin-left: 7px; }
```
